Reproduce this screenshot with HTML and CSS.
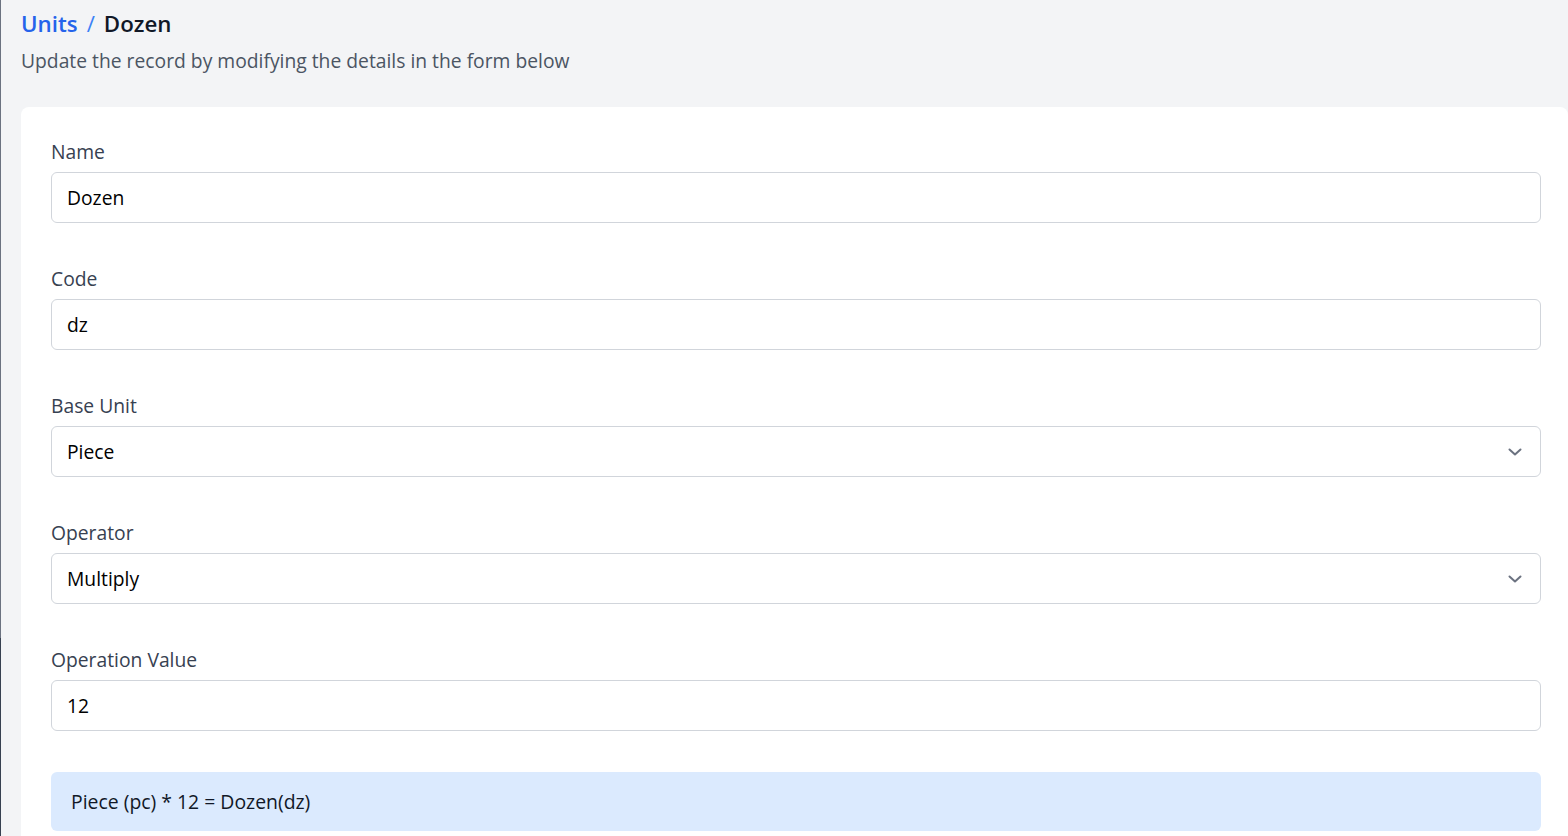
FILE: index.html
```html
<!DOCTYPE html>
<html lang="en">
<head>
<meta charset="utf-8">
<title>Units / Dozen</title>
<link rel="stylesheet" href="styles.css">
</head>
<body>
<div class="layout">
  <div class="sidebar-edge">
    <div class="edge-top"></div>
    <div class="edge-bottom"></div>
  </div>
  <main class="main">
    <header class="page-header">
      <h1 class="breadcrumb"><a class="crumb-link" href="#">Units</a><span class="crumb-sep">/</span><span class="crumb-current">Dozen</span></h1>
      <p class="subtitle">Update the record by modifying the details in the form below</p>
    </header>
    <section class="card">
      <div class="field">
        <label class="label">Name</label>
        <div class="input">Dozen</div>
      </div>
      <div class="field">
        <label class="label">Code</label>
        <div class="input">dz</div>
      </div>
      <div class="field">
        <label class="label">Base Unit</label>
        <div class="input select"><span>Piece</span>
          <svg class="chevron" viewBox="0 0 20 20" width="20" height="20"><path d="M4.5 7.5 L10 12.5 L15.5 7.5" fill="none" stroke="currentColor" stroke-width="2" stroke-linecap="round" stroke-linejoin="round"/></svg>
        </div>
      </div>
      <div class="field">
        <label class="label">Operator</label>
        <div class="input select"><span>Multiply</span>
          <svg class="chevron" viewBox="0 0 20 20" width="20" height="20"><path d="M4.5 7.5 L10 12.5 L15.5 7.5" fill="none" stroke="currentColor" stroke-width="2" stroke-linecap="round" stroke-linejoin="round"/></svg>
        </div>
      </div>
      <div class="field">
        <label class="label">Operation Value</label>
        <div class="input">12</div>
      </div>
      <div class="alert">Piece (pc) * 12 = Dozen(dz)</div>
    </section>
  </main>
</div>
</body>
</html>
```

FILE: styles.css
```css
html, body {
  margin: 0;
  padding: 0;
  height: 100%;
  overflow: hidden;
}
body {
  background: #f3f4f6;
  font-family: "Open Sans", "Lato", sans-serif;
  color: #111827;
}
.layout {
  display: flex;
  height: 836px;
}
.sidebar-edge {
  width: 1px;
  flex: none;
  display: flex;
  flex-direction: column;
}
.edge-top {
  height: 638px;
  background: #6b7280;
}
.edge-bottom {
  flex: 1;
  background: #374151;
}
.main {
  flex: 1;
  padding: 9px 0 0 20px;
  min-width: 0;
  display: flex;
  flex-direction: column;
}
.page-header {
  display: flex;
  flex-direction: column;
}
.breadcrumb {
  margin: 0;
  font-size: 22.3px;
  line-height: 30px;
  font-weight: 600;
  display: flex;
  align-items: baseline;
}
.crumb-link {
  color: #2563eb;
  text-decoration: none;
}
.crumb-sep {
  color: #3b82f6;
  font-weight: 400;
  margin: 0 9px;
}
.crumb-current {
  color: #111827;
}
.subtitle {
  margin: 8px 0 0 0;
  font-size: 19.3px;
  line-height: 27px;
  color: #4b5563;
}
.card {
  margin-top: 33px;
  flex: 1;
  min-height: 0;
  overflow: hidden;
  background: #fff;
  border-radius: 8px 8px 0 0;
  padding: 31px 27px 0 30px;
  display: flex;
  flex-direction: column;
  gap: 42px;
}
.field {
  display: flex;
  flex-direction: column;
}
.label {
  font-size: 19.3px;
  line-height: 27px;
  color: #374151;
  margin-bottom: 7px;
}
.input {
  height: 51px;
  flex: none;
  box-sizing: border-box;
  border: 1px solid #d1d5db;
  border-radius: 6px;
  padding: 0 16px 0 15px;
  display: flex;
  align-items: center;
  justify-content: space-between;
  font-size: 19.3px;
  color: #000;
}
.chevron {
  color: #6b7280;
  margin-right: -1px;
}
.alert {
  margin-top: -1px;
  height: 59px;
  flex: none;
  box-sizing: border-box;
  background: #dbeafe;
  border-radius: 6px;
  padding: 0 20px;
  display: flex;
  align-items: center;
  font-size: 19.4px;
  color: #111827;
}
```
